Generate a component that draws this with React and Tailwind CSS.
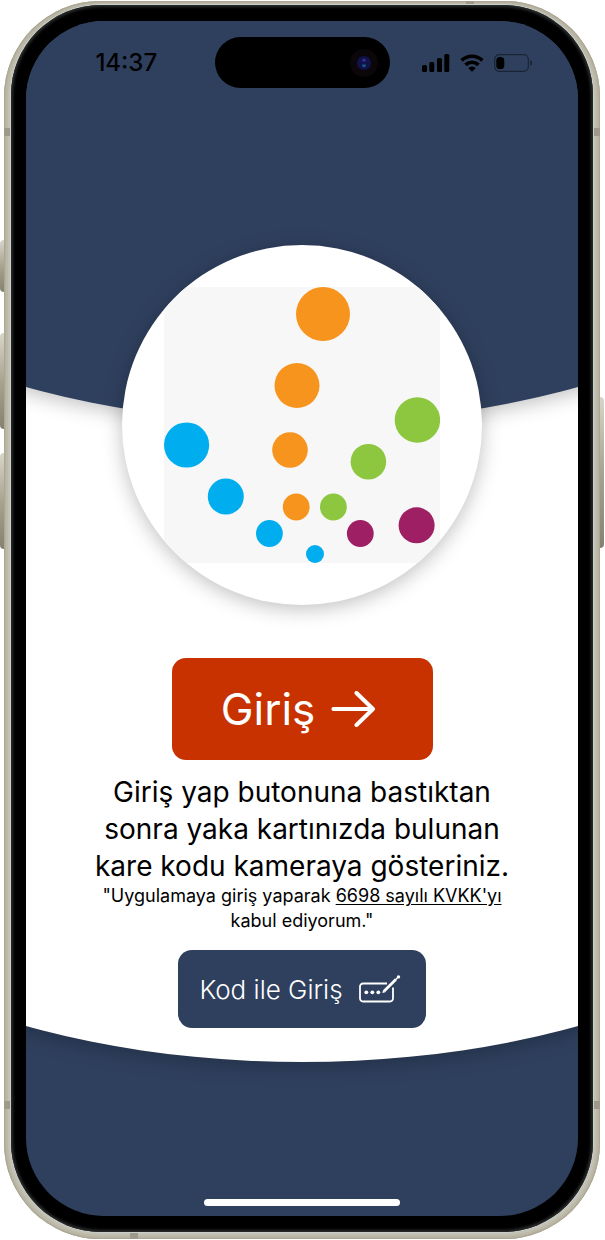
import React from "react";

const dots = [
  { x: 173, y: 44, r: 27, fill: "#f7941d" },
  { x: 147, y: 115.5, r: 22.5, fill: "#f7941d" },
  { x: 140, y: 180, r: 17.8, fill: "#f7941d" },
  { x: 146.2, y: 237, r: 13.4, fill: "#f7941d" },
  { x: 36.6, y: 175, r: 22.6, fill: "#00aeef" },
  { x: 75.8, y: 226.5, r: 18, fill: "#00aeef" },
  { x: 119.4, y: 263.5, r: 13.4, fill: "#00aeef" },
  { x: 165, y: 284, r: 9, fill: "#00aeef" },
  { x: 267.4, y: 150, r: 22.7, fill: "#8dc63f" },
  { x: 218.4, y: 191.7, r: 17.8, fill: "#8dc63f" },
  { x: 183.4, y: 237, r: 13.4, fill: "#8dc63f" },
  { x: 210.3, y: 263.5, r: 13.4, fill: "#9e1f63" },
  { x: 266.6, y: 255.3, r: 18, fill: "#9e1f63" },
];

function Logo() {
  return (
    <svg viewBox="14 17 276 276" className="size-[276px]" role="img" aria-label="Logo">
      <rect x="14" y="17" width="276" height="276" fill="#f7f7f7" />
      {dots.map((d) => (
        <circle key={`${d.x}-${d.y}`} cx={d.x} cy={d.y} r={d.r} fill={d.fill} />
      ))}
    </svg>
  );
}

function SignalIcon() {
  return (
    <svg viewBox="0 0 28 18" className="h-[18px] w-7" aria-hidden="true">
      <rect x="0" y="11" width="5" height="7" rx="1.5" />
      <rect x="7.3" y="8" width="5" height="10" rx="1.5" />
      <rect x="15" y="4" width="5" height="14" rx="1.5" />
      <rect x="22.3" y="0" width="5" height="18" rx="1.5" />
    </svg>
  );
}

function WifiIcon() {
  return (
    <svg viewBox="0 0 24 18" className="h-[18px] w-6" fill="none" stroke="#000" strokeWidth="3.6" aria-hidden="true">
      <path d="M1.6 6.4a15 15 0 0 1 20.8 0" />
      <path d="M5.5 10.9a9.4 9.4 0 0 1 13 0" />
      <path d="M12 17.8 8.2 14a5.5 5.5 0 0 1 7.6 0z" fill="#000" stroke="none" />
    </svg>
  );
}

function BatteryIcon() {
  return (
    <svg viewBox="0 0 39 18" className="h-[18px] w-[39px]" aria-hidden="true">
      <rect x="0.7" y="0.7" width="33.6" height="16.6" rx="4.5" fill="none" stroke="#1a2436" strokeWidth="1.2" />
      <rect x="2.3" y="3" width="8" height="12" rx="3.6" />
      <path d="M36.2 6v6c1.2-.4 2-1.6 2-3s-.8-2.6-2-3z" fill="#1a2436" />
    </svg>
  );
}

function ArrowIcon() {
  return (
    <svg viewBox="0 0 44 36" className="h-9 w-11" fill="none" stroke="currentColor" strokeWidth="4" strokeLinecap="round" strokeLinejoin="round" aria-hidden="true">
      <path d="M2.4 18H42M25.5 2 42 18 25.5 34" />
    </svg>
  );
}

function CodeIcon() {
  return (
    <svg viewBox="0 0 42 28" className="h-7 w-[42px]" fill="none" stroke="currentColor" strokeWidth="1.8" aria-hidden="true">
      <path d="M28 8.500H4a3 3 0 0 0-3 3V23.500a3 3 0 0 0 3 3h27a3 3 0 0 0 3-3V12.500" />
      <path d="M25 16.300 36.800 4.500" strokeWidth="2.800" />
      <path d="m23.300 18 .8-3 2.200 2.200z" fill="currentColor" stroke="none" />
      <path d="m36 5.300 3-3" strokeWidth="1.600" />
      <circle cx="39.500" cy="1.900" r="1.700" fill="currentColor" stroke="none" />
      <g fill="currentColor" stroke="none">
        <circle cx="7.300" cy="17.300" r="1.900" />
        <circle cx="13.300" cy="17.300" r="1.900" />
        <circle cx="19.300" cy="17.300" r="1.900" />
      </g>
    </svg>
  );
}

function StatusBar() {
  return (
    <div className="mx-auto grid w-1/2 grid-cols-[1fr_175px_1fr] items-center pt-4 text-black">
      <time className="pl-3 text-center text-2xl font-medium">14:37</time>
      <div className="flex h-[51px] items-center justify-end rounded-full bg-black pr-3">
        <div className="flex size-7 items-center justify-center rounded-full bg-[#0a0609]">
          <div className="flex size-[14px] items-center justify-center rounded-full bg-[#12124a]">
            <div className="h-2 w-1 rounded-full bg-linear-to-b from-[#4646b4] via-[#0a0a40] to-[#1c7fa8]" />
          </div>
        </div>
      </div>
      <div className="flex items-center justify-center gap-[10px] pr-3">
        <SignalIcon />
        <WifiIcon />
        <BatteryIcon />
      </div>
    </div>
  );
}

function FrameDetails() {
  const key = "absolute w-1 bg-linear-to-b from-[#d8d6cb] via-[#a8a491] to-[#858070]";
  const band = "absolute bg-[#9d998b]";
  return (
    <div aria-hidden="true">
      <span className={`${key} -left-1 top-[239px] h-[52px] rounded-l-sm`} />
      <span className={`${key} -left-1 top-[332px] h-[96px] rounded-l-sm`} />
      <span className={`${key} -left-1 top-[452px] h-[96px] rounded-l-sm`} />
      <span className={`${key} -right-1 top-[396px] h-[151px] rounded-r-sm`} />
      <span className={`${band} left-0 top-[127px] h-2 w-[7px]`} />
      <span className={`${band} right-0 top-[127px] h-2 w-[7px]`} />
      <span className={`${band} bottom-[130px] left-0 h-2 w-[7px]`} />
      <span className={`${band} bottom-[130px] right-0 h-2 w-[7px]`} />
      <span className={`${band} right-[126px] top-0 h-1 w-2`} />
      <span className={`${band} bottom-0 left-[126px] h-[7px] w-2`} />
    </div>
  );
}

export default function App() {
  return (
    <div className="flex min-h-screen flex-col bg-white pb-px pl-1 pr-[5px] pt-px font-['Inter','Liberation_Sans',sans-serif]">
      <div className="relative flex grow flex-col rounded-[96px] bg-[#c3c1b4] px-[7px] pb-[7px] pt-1 shadow-[inset_0_0_2px_1px_#a5a08f,inset_0_0_0_4px_#bdb9a8]">
        <FrameDetails />
        <div className="relative flex grow flex-col rounded-[90px] bg-black px-[15px] py-4 shadow-[0_0_0_1px_#c9cfcc,inset_0_0_3px_2px_#2c2e2e]">
          <div className="flex grow flex-col items-center overflow-hidden rounded-[78px] bg-[#2f405e]">
            <header className="relative z-10 h-[402px] w-[200%] shrink-0 rounded-b-[50%_269px] bg-[#2f405e] shadow-[0_4px_20px_rgba(0,0,0,0.25)]">
              <StatusBar />
            </header>

            <main className="-mt-[60px] flex w-[200%] shrink-0 flex-col items-center rounded-b-[50%_269px] bg-white px-[25%] pb-[34px] shadow-[0_4px_20px_rgba(0,0,0,0.25)]">
              <div className="relative z-20 -mt-[118px] flex size-[360px] items-center justify-center overflow-hidden rounded-full bg-white shadow-[0_4px_20px_rgba(0,0,0,0.25)]">
                <Logo />
              </div>

              <button type="button" className="mt-[53px] flex h-[102px] w-[261px] items-center justify-center gap-4 rounded-[14px] bg-[#c83200] pr-2 text-[44px] text-white">
                Giriş
                <ArrowIcon />
              </button>

              <p className="mt-[14px] text-center text-[28px] leading-[37px] text-black">
                Giriş yap butonuna bastıktan
                <br />
                sonra yaka kartınızda bulunan
                <br />
                kare kodu kameraya gösteriniz.
              </p>
              <p className="-mt-0.5 text-center text-lg leading-[25px] text-black">
                "Uygulamaya giriş yaparak{" "}
                <a href="#kvkk" className="underline underline-offset-2">
                  6698 sayılı KVKK'yı
                </a>
                <br />
                kabul ediyorum."
              </p>

              <button type="button" className="mt-[17px] flex h-[78px] w-[248px] items-center justify-center gap-4 rounded-[14px] bg-[#2f405e] pr-1 text-[26px] font-light text-white">
                Kod ile Giriş
                <CodeIcon />
              </button>
            </main>

            <footer className="mt-auto pb-[10px] pt-6">
              <div className="h-[7px] w-[196px] rounded-full bg-white" />
            </footer>
          </div>
        </div>
      </div>
    </div>
  );
}
